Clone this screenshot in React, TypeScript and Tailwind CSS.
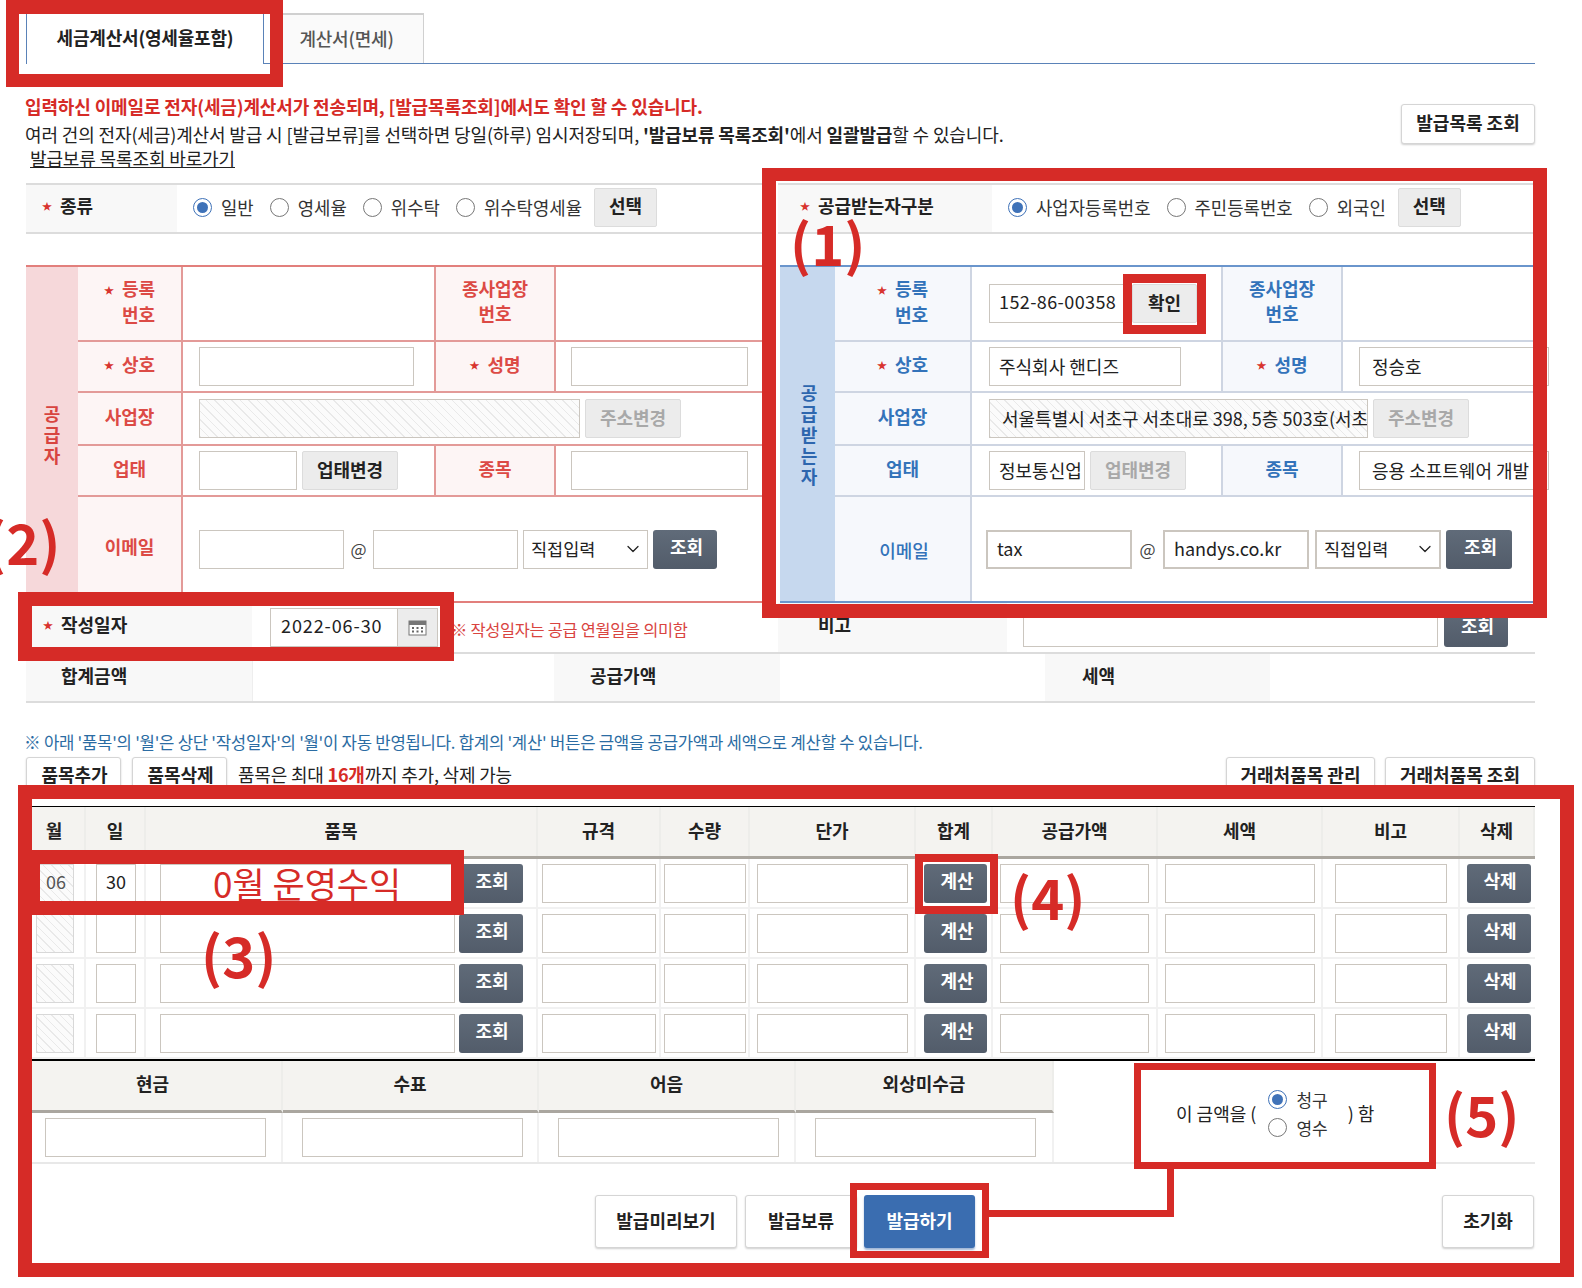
import { ChevronDown } from 'lucide-react'
import type { ReactNode } from 'react'

const hatch =
  'bg-[repeating-linear-gradient(45deg,#e9e9e9_0,#e9e9e9_1px,#fbfbfb_1px,#fbfbfb_6px)]'

const tones = {
  red: {
    strip: 'bg-[#f6d8da] text-[#d8443f]',
    label: 'bg-[#fdf5f5] text-[#dc4a45] border-[#e39a98]',
    line: 'border-[#e39a98]',
  },
  blue: {
    strip: 'bg-[#c6d8ee] text-[#2d66ae]',
    label: 'bg-[#f6f8fc] text-[#3373ba] border-[#ced5e2]',
    line: 'border-[#ced5e2]',
  },
}

type Tone = keyof typeof tones

function Star() {
  return <span className="mr-[8px] align-[2px] text-[10px] text-[#d8342f]">★</span>
}

function Field({ className = '', value = '', hatched = false }: { className?: string; value?: string; hatched?: boolean }) {
  return (
    <div
      className={`flex h-[39px] shrink-0 items-center overflow-hidden whitespace-nowrap border border-[#cbc6bf] pl-[9px] text-[18px] text-[#222] ${
        hatched ? hatch : 'bg-white'
      } ${className}`}
    >
      {value}
    </div>
  )
}

function GrayBtn({ children, className = '', muted = false }: { children: ReactNode; className?: string; muted?: boolean }) {
  return (
    <button
      className={`flex h-[39px] shrink-0 items-center justify-center rounded-[2px] border border-[#dcdcdc] bg-[#ececec] pb-[3px] text-[18px] font-bold ${
        muted ? 'text-[#a8a8a8]' : 'text-[#222]'
      } ${className}`}
    >
      {children}
    </button>
  )
}

function DarkBtn({ children, className = '' }: { children: ReactNode; className?: string }) {
  return (
    <button
      className={`flex h-[39px] shrink-0 items-center justify-center rounded-[3px] bg-gradient-to-b from-[#606b79] to-[#525c6a] pb-[5px] pl-[3px] text-[18px] font-bold text-white ${className}`}
    >
      {children}
    </button>
  )
}

function OutlineBtn({ children, className = '' }: { children: ReactNode; className?: string }) {
  return (
    <button
      className={`flex shrink-0 items-center justify-center rounded-[3px] border border-[#d5d5d5] bg-white pb-[3px] text-[18px] font-bold text-[#222] shadow-[0_1px_2px_#cfcfcf] ${className}`}
    >
      {children}
    </button>
  )
}

function Radio({ label, checked = false, gap = 'mr-[16px]', className = 'text-[17.8px]' }: { label: string; checked?: boolean; gap?: string; className?: string }) {
  return (
    <label className={`flex items-center gap-[9px] text-[#333] ${className} ${gap}`}>
      <span
        className={`flex h-[19px] w-[19px] shrink-0 items-center justify-center rounded-full border bg-white ${
          checked ? 'border-[#3f72b8]' : 'border-[#777]'
        }`}
      >
        {checked && <span className="h-[11px] w-[11px] rounded-full bg-[#3f72b8]" />}
      </span>
      {label}
    </label>
  )
}

function SelectBox({ className = '' }: { className?: string }) {
  return (
    <div className={`flex h-[39px] shrink-0 items-center justify-between border border-[#cbc6bf] bg-white pl-[7px] pr-[4px] text-[17.5px] text-[#222] ${className}`}>
      직접입력
      <ChevronDown size={20} strokeWidth={1.5} />
    </div>
  )
}

function PartyLabel({ tone, children, className = 'pb-[5px] font-bold' }: { tone: Tone; children: ReactNode; className?: string }) {
  return (
    <div className={`flex items-center justify-center border-r-2 text-center text-[18px] leading-[25px] ${tones[tone].label} ${className}`}>
      {children}
    </div>
  )
}

function PartyRow({ tone, cols, className, children }: { tone: Tone; cols: string; className: string; children: ReactNode }) {
  return <div className={`grid border-b-2 ${cols} ${tones[tone].line} ${className}`}>{children}</div>
}

function Strip({ tone, text, className }: { tone: Tone; text: string; className: string }) {
  return (
    <div className={`flex shrink-0 flex-col items-center justify-center text-[18px] font-bold leading-[21px] ${tones[tone].strip} ${className}`}>
      {text.split('').map((c, i) => (
        <span key={i}>{c}</span>
      ))}
    </div>
  )
}

function TwoLine({ star, top, bottom, align = 'text-right' }: { star?: boolean; top: string; bottom: string; align?: string }) {
  return (
    <span className={`inline-block ${align}`}>
      {star && <Star />}
      {top}
      <br />
      {bottom}
    </span>
  )
}

function Supplier() {
  const cols = 'grid-cols-[105px_253px_120px_minmax(0,1fr)]'
  return (
    <div className="flex h-[338px] border-y-2 border-[#e27f7c]">
      <Strip tone="red" text="공급자" className="w-[52px]" />
      <div className="min-w-0 flex-1">
        <PartyRow tone="red" cols={cols} className="h-[75px]">
          <PartyLabel tone="red"><TwoLine star top="등록" bottom="번호" /></PartyLabel>
          <div className="border-r-2 border-[#e39a98]" />
          <PartyLabel tone="red"><TwoLine top="종사업장" bottom="번호" align="text-center" /></PartyLabel>
          <div />
        </PartyRow>
        <PartyRow tone="red" cols={cols} className="h-[51px]">
          <PartyLabel tone="red"><Star />상호</PartyLabel>
          <div className="flex items-center border-r-2 border-[#e39a98] pl-[16px]"><Field className="w-[215px]" /></div>
          <PartyLabel tone="red"><Star />성명</PartyLabel>
          <div className="flex items-center pl-[15px]"><Field className="w-[177px]" /></div>
        </PartyRow>
        <PartyRow tone="red" cols="grid-cols-[105px_minmax(0,1fr)]" className="h-[53px]">
          <PartyLabel tone="red">사업장</PartyLabel>
          <div className="flex items-center gap-[5px] pl-[16px]">
            <Field hatched className="w-[381px]" />
            <GrayBtn muted className="w-[96px]">주소변경</GrayBtn>
          </div>
        </PartyRow>
        <PartyRow tone="red" cols={cols} className="h-[51px]">
          <PartyLabel tone="red">업태</PartyLabel>
          <div className="flex items-center gap-[5px] border-r-2 border-[#e39a98] pl-[16px]">
            <Field className="w-[98px]" />
            <GrayBtn className="w-[96px]">업태변경</GrayBtn>
          </div>
          <PartyLabel tone="red">종목</PartyLabel>
          <div className="flex items-center pl-[15px]"><Field className="w-[177px]" /></div>
        </PartyRow>
        <div className="grid h-[104px] grid-cols-[105px_minmax(0,1fr)]">
          <PartyLabel tone="red">이메일</PartyLabel>
          <div className="flex items-center pl-[16px]">
            <Field className="w-[145px]" />
            <span className="w-[29px] text-center text-[17px] text-[#444]">@</span>
            <Field className="w-[145px]" />
            <SelectBox className="ml-[5px] w-[125px]" />
            <DarkBtn className="ml-[5px] w-[64px]">조회</DarkBtn>
          </div>
        </div>
      </div>
    </div>
  )
}

function Receiver() {
  const cols = 'grid-cols-[137px_251px_120px_minmax(0,1fr)]'
  return (
    <div className="ml-[2px] flex h-[338px] border-y-2 border-[#6a95cc]">
      <Strip tone="blue" text="공급받는자" className="w-[55px] pl-[3px]" />
      <div className="min-w-0 flex-1">
        <PartyRow tone="blue" cols={cols} className="h-[75px]">
          <PartyLabel tone="blue"><TwoLine star top="등록" bottom="번호" /></PartyLabel>
          <div className="flex items-center gap-[7px] border-r-2 border-[#ced5e2] pl-[17px]">
            <Field value="152-86-00358" className="w-[136px] pb-[4px] pl-[5px] tracking-[0.4px]" />
            <GrayBtn className="w-[65px]">확인</GrayBtn>
          </div>
          <PartyLabel tone="blue"><TwoLine top="종사업장" bottom="번호" align="text-center" /></PartyLabel>
          <div />
        </PartyRow>
        <PartyRow tone="blue" cols={cols} className="h-[51px]">
          <PartyLabel tone="blue"><Star />상호</PartyLabel>
          <div className="flex items-center border-r-2 border-[#ced5e2] pl-[17px]"><Field value="주식회사 핸디즈" className="w-[192px]" /></div>
          <PartyLabel tone="blue"><Star />성명</PartyLabel>
          <div className="flex items-center pl-[16px]"><Field value="정승호" className="w-[190px] pl-[12px]" /></div>
        </PartyRow>
        <PartyRow tone="blue" cols="grid-cols-[137px_minmax(0,1fr)]" className="h-[53px]">
          <PartyLabel tone="blue">사업장</PartyLabel>
          <div className="flex items-center gap-[5px] pl-[17px]">
            <Field hatched value="서울특별시 서초구 서초대로 398, 5층 503호(서초" className="w-[379px] pl-[12px]" />
            <GrayBtn muted className="w-[96px]">주소변경</GrayBtn>
          </div>
        </PartyRow>
        <PartyRow tone="blue" cols={cols} className="h-[51px]">
          <PartyLabel tone="blue">업태</PartyLabel>
          <div className="flex items-center gap-[5px] border-r-2 border-[#ced5e2] pl-[17px]">
            <Field value="정보통신업" className="w-[96px]" />
            <GrayBtn muted className="w-[96px]">업태변경</GrayBtn>
          </div>
          <PartyLabel tone="blue">종목</PartyLabel>
          <div className="flex items-center pl-[16px]"><Field value="응용 소프트웨어 개발" className="w-[190px] pl-[12px]" /></div>
        </PartyRow>
        <div className="grid h-[104px] grid-cols-[137px_minmax(0,1fr)]">
          <PartyLabel tone="blue" className="border-r-0 pl-[3px] pt-[3px] font-medium">이메일</PartyLabel>
          <div className="flex items-center pl-[14px]">
            <Field value="tax" className="w-[146px] border-2 pb-[2px] pl-[6px] text-[17px]" />
            <span className="w-[31px] text-center text-[17px] text-[#444]">@</span>
            <Field value="handys.co.kr" className="w-[146px] border-2 pb-[2px] pl-[6px] text-[16.500px]" />
            <SelectBox className="ml-[6px] w-[126px] border-2" />
            <DarkBtn className="ml-[5px] w-[66px]">조회</DarkBtn>
          </div>
        </div>
      </div>
    </div>
  )
}

const itemCols =
  'grid-cols-[54px_60px_392px_123px_89px_166px_77px_165px_165px_137px_75px]'
const itemHeads = ['월', '일', '품목', '규격', '수량', '단가', '합계', '공급가액', '세액', '비고', '삭제']

function ItemRow({ month = '', day = '' }: { month?: string; day?: string }) {
  const cell = 'flex items-center justify-center border-r-2 border-[#f1f1f1]'
  return (
    <div className={`grid h-[50px] border-b-2 border-[#f1f1f1] ${itemCols}`}>
      <div className={`${cell} justify-start pl-[4px]`}>
        <Field hatched value={month} className="w-[38px] border-[#d8d8d8] pb-[4px] pl-[5px] text-[17px] text-[#555]" />
      </div>
      <div className={`${cell} pl-[2px]`}><Field value={day} className="w-[40px] pb-[4px] pl-[7px] text-[17px]" /></div>
      <div className={`${cell} gap-[4px]`}>
        <Field className="w-[295px]" />
        <DarkBtn className="w-[64px]">조회</DarkBtn>
      </div>
      <div className={cell}><Field className="w-[114px]" /></div>
      <div className={cell}><Field className="w-[82px]" /></div>
      <div className={cell}><Field className="w-[151px]" /></div>
      <div className={`${cell} pl-[4px]`}><DarkBtn className="w-[63px]">계산</DarkBtn></div>
      <div className={cell}><Field className="w-[149px]" /></div>
      <div className={cell}><Field className="w-[150px]" /></div>
      <div className={cell}><Field className="w-[112px]" /></div>
      <div className="flex items-center justify-center pl-[2px]"><DarkBtn className="w-[64px]">삭제</DarkBtn></div>
    </div>
  )
}

function Marks() {
  const red = 'pointer-events-none absolute border-[#d62b27]'
  const num = 'absolute text-[56px] font-bold leading-none text-[#d62b27]'
  return (
    <>
      <div className={`${red} left-[6px] top-0 h-[87px] w-[277px] border-[13px] border-t-[14px]`} />
      <div className={`${red} left-[762px] top-[168px] h-[450px] w-[785px] border-[14px] border-t-[13px]`} />
      <div className={`${red} left-[1123px] top-[274px] h-[60px] w-[83px] border-[9px]`} />
      <div className={`${red} left-[18px] top-[592px] h-[69px] w-[436px] border-[14px]`} />
      <div className={`${red} left-[18px] top-[785px] h-[492px] w-[1556px] border-[14px]`} />
      <div className={`${red} left-[32px] top-[850px] flex h-[65px] w-[432px] items-center border-y-[14px] border-l-[8px] border-r-[13px] pl-[173px] text-[35px] leading-none text-[#d62b27]`}>
        0월 운영수익
      </div>
      <div className={`${red} left-[915px] top-[854px] h-[60px] w-[83px] border-[8px]`} />
      <div className={`${red} left-[1134px] top-[1063px] h-[106px] w-[302px] border-[7px]`} />
      <div className={`${red} left-[850px] top-[1183px] h-[75px] w-[139px] border-[7px]`} />
      <div className={`${red} left-[1167px] top-[1169px] h-[48px] w-[7px] border-l-[7px]`} />
      <div className={`${red} left-[989px] top-[1210px] h-[7px] w-[178px] border-t-[7px]`} />
      <div className={`${num} left-[790px] top-[214px]`}>(1)</div>
      <div className={`${num} left-[-15px] top-[513px]`}>(2)</div>
      <div className={`${num} left-[201px] top-[926px]`}>(3)</div>
      <div className={`${num} left-[1010px] top-[868px]`}>(4)</div>
      <div className={`${num} left-[1444px] top-[1085px]`}>(5)</div>
    </>
  )
}

export default function App() {
  const payCells = ['pr-[2px]', 'pl-[4px]', 'pl-[4px]', 'pl-[2px]']
  return (
    <div className="relative h-[1288px] w-[1582px] overflow-hidden bg-white font-['Noto_Sans_CJK_KR','Noto_Sans',sans-serif] text-[#222]">
      <div className="ml-[26px] w-[1509px]">
        {/* Tabs */}
        <div className="flex h-[64px] items-end gap-[9px] border-b border-[#5a82b8] pt-[14px]">
          <div className="-mb-px flex h-[51px] w-[238px] items-center justify-center border border-b-0 border-[#5a82b8] bg-white pb-[4px] text-[18px] font-bold tracking-[-0.2px]">
            세금계산서(영세율포함)
          </div>
          <div className="flex h-[50px] w-[151px] items-center justify-center border border-b-0 border-t-2 border-[#d0d0d0] bg-[#fafafa] pb-[2px] pr-[4px] text-[18px] font-medium tracking-[-0.2px] text-[#555]">
            계산서(면세)
          </div>
        </div>

        {/* Notices */}
        <div className="flex h-[119px] items-start justify-between">
          <div className="-ml-px pt-[29px] text-[18px] leading-[27px] tracking-[-0.13px]">
            <p className="font-bold text-[#d62b27]">입력하신 이메일로 전자(세금)계산서가 전송되며, [발급목록조회]에서도 확인 할 수 있습니다.</p>
            <p className="pt-px">
              여러 건의 전자(세금)계산서 발급 시 [발급보류]를 선택하면 당일(하루) 임시저장되며, <b className="font-bold">'발급보류 목록조회'</b>에서 <b className="font-bold">일괄발급</b>할 수 있습니다.
            </p>
            <a className="ml-[5px] block leading-[20px] underline">발급보류 목록조회 바로가기</a>
          </div>
          <OutlineBtn className="mt-[40px] h-[40px] w-[134px]">발급목록 조회</OutlineBtn>
        </div>

        {/* Kind rows */}
        <div className="grid grid-cols-[746px_757px] gap-x-[6px]">
          <div className="flex h-[51px] border-y-2 border-[#dcdcdc]">
            <div className="flex w-[151px] items-center bg-[#f8f8f8] pb-[6px] pl-[16px] text-[18px] font-bold">
              <Star />종류
            </div>
            <div className="flex items-center pb-[3px] pl-[16px]">
              <Radio label="일반" checked />
              <Radio label="영세율" />
              <Radio label="위수탁" />
              <Radio label="위수탁영세율" gap="mr-[12px]" />
              <GrayBtn className="w-[63px]">선택</GrayBtn>
            </div>
          </div>
          <div className="flex h-[51px] border-y-2 border-[#dcdcdc]">
            <div className="flex w-[214px] items-center bg-[#f8f8f8] pb-[6px] pl-[22px] text-[18px] font-bold">
              <Star />공급받는자구분
            </div>
            <div className="flex items-center pb-[3px] pl-[16px]">
              <Radio label="사업자등록번호" checked />
              <Radio label="주민등록번호" />
              <Radio label="외국인" gap="mr-[12px]" />
              <GrayBtn className="w-[63px]">선택</GrayBtn>
            </div>
          </div>
        </div>

        {/* Supplier and receiver */}
        <div className="mt-[31px] grid grid-cols-[746px_757px] gap-x-[6px]">
          <Supplier />
          <Receiver />
        </div>

        {/* Date row */}
        <div className="grid h-[51px] grid-cols-[752px_757px] border-b-2 border-[#dcdcdc]">
          <div className="flex items-center">
            <div className="flex h-full w-[226px] items-center bg-[#f8f8f8] pb-[6px] pl-[17px] text-[18px] font-bold">
              <Star />작성일자
            </div>
            <div className="ml-[18px] flex">
              <Field value="2022-06-30" className="w-[128px] pb-[4px] pl-[10px] tracking-[0.9px]" />
              <div className="flex h-[39px] w-[40px] items-center justify-center border border-l-0 border-[#cbc6bf] bg-[#ececec]">
                <svg width="19" height="17" viewBox="0 0 19 17">
                  <rect x="1" y="2" width="17" height="14" fill="#fff" stroke="#777" />
                  <rect x="1" y="2" width="17" height="4" fill="#777" />
                  <path d="M4 9h2M8.500 9h2M13 9h2M4 12.500h2M8.500 12.500h2M13 12.500h2" stroke="#666" strokeWidth="2" />
                </svg>
              </div>
            </div>
            <span className="ml-[13px] mt-[3px] text-[16.4px] tracking-[-0.3px] text-[#d9443f]">※ 작성일자는 공급 연월일을 의미함</span>
          </div>
          <div className="flex items-center">
            <div className="flex h-full w-[229px] items-center bg-[#f8f8f8] pb-[6px] pl-[40px] text-[18px] font-bold">비고</div>
            <Field className="ml-[16px] w-[415px]" />
            <DarkBtn className="ml-[6px] w-[64px]">조회</DarkBtn>
          </div>
        </div>

        {/* Totals */}
        <div className="grid h-[49px] grid-cols-[226px_302px_226px_265px_225px_1fr] border-b-2 border-[#dcdcdc] text-[18px] font-bold">
          <div className="flex items-center bg-[#f8f8f8] pb-[5px] pl-[35px]">합계금액</div>
          <div className="border-l border-[#eee]" />
          <div className="flex items-center bg-[#f8f8f8] pb-[5px] pl-[36px]">공급가액</div>
          <div />
          <div className="flex items-center bg-[#f8f8f8] pb-[5px] pl-[37px]">세액</div>
          <div />
        </div>

        {/* Item notice */}
        <p className="-ml-[2px] mt-[26px] h-[28px] text-[16.7px] leading-[26px] tracking-[-0.25px] text-[#2b6ca3]">
          ※ 아래 '품목'의 '월'은 상단 '작성일자'의 '월'이 자동 반영됩니다. 합계의 '계산' 버튼은 금액을 공급가액과 세액으로 계산할 수 있습니다.
        </p>

        {/* Item tools */}
        <div className="flex h-[38px] items-center">
          <OutlineBtn className="h-[38px] w-[95px] pl-[2px]">품목추가</OutlineBtn>
          <OutlineBtn className="ml-[11px] h-[38px] w-[95px] pl-[2px]">품목삭제</OutlineBtn>
          <span className="ml-[11px] pb-[3px] text-[18px] tracking-[-0.2px]">
            품목은 최대 <b className="font-bold text-[#d62b27]">16개</b>까지 추가, 삭제 가능
          </span>
          <OutlineBtn className="ml-auto h-[38px] w-[149px]">거래처품목 관리</OutlineBtn>
          <OutlineBtn className="ml-[10px] h-[38px] w-[150px]">거래처품목 조회</OutlineBtn>
        </div>

        {/* Item table */}
        <div className="ml-[6px] mt-[11px] w-[1503px]">
          <div className={`grid h-[53px] border-y border-b-[3px] border-t-black border-b-[#aaa69f] bg-[#f4f3f0] text-[18px] font-bold ${itemCols}`}>
            {itemHeads.map((h, i) => (
              <div key={h} className={`flex items-center justify-center border-r-2 border-[#ededea] pb-[3px] ${i === 0 ? 'pr-[8px]' : ''}`}>
                {h}
              </div>
            ))}
          </div>
          <ItemRow month="06" day="30" />
          <ItemRow />
          <ItemRow />
          <ItemRow />
          <div className="h-[2px] bg-black" />

          {/* Payment */}
          <div className="flex border-b-2 border-[#e8e8e8]">
            <div className="grid w-[1022px] grid-cols-[251px_256px_257px_258px]">
              {['현금', '수표', '어음', '외상미수금'].map((h, i) => (
                <div key={h} className={`flex h-[52px] items-center justify-center border-b-[3px] border-r-2 border-b-[#aaa69f] border-r-[#ededea] bg-[#f4f3f0] pb-[4px] text-[18px] font-bold ${i === 0 ? 'pr-[8px]' : ''}`}>
                  {h}
                </div>
              ))}
              {payCells.map((pad, i) => (
                <div key={i} className={`flex h-[49px] items-center justify-center border-r-2 border-[#f1f1f1] ${pad}`}>
                  <Field className="w-[221px]" />
                </div>
              ))}
            </div>
            <div className="flex flex-1 items-center pl-[122px] pt-[4px] text-[18px]">
              이 금액을 (
              <div className="ml-[12px] mr-[20px] flex flex-col">
                <Radio label="청구" checked gap="" className="text-[17px] leading-[28px]" />
                <Radio label="영수" gap="" className="text-[17px] leading-[28px]" />
              </div>
              ) 함
            </div>
          </div>
        </div>

        {/* Actions */}
        <div className="mt-[31px] flex">
          <OutlineBtn className="ml-[569px] h-[53px] w-[142px] bg-[#f7f7f7]">발급미리보기</OutlineBtn>
          <OutlineBtn className="ml-[8px] h-[53px] w-[112px] bg-[#f7f7f7]">발급보류</OutlineBtn>
          <button className="ml-[7px] h-[53px] w-[111px] rounded-[3px] bg-[#3a6db0] pb-[3px] text-[18px] font-bold text-white shadow-[0_2px_2px_#9fb6d6]">
            발급하기
          </button>
          <OutlineBtn className="ml-auto mr-[1px] h-[53px] w-[92px] bg-[#f7f7f7]">초기화</OutlineBtn>
        </div>
      </div>

      <Marks />
    </div>
  )
}
